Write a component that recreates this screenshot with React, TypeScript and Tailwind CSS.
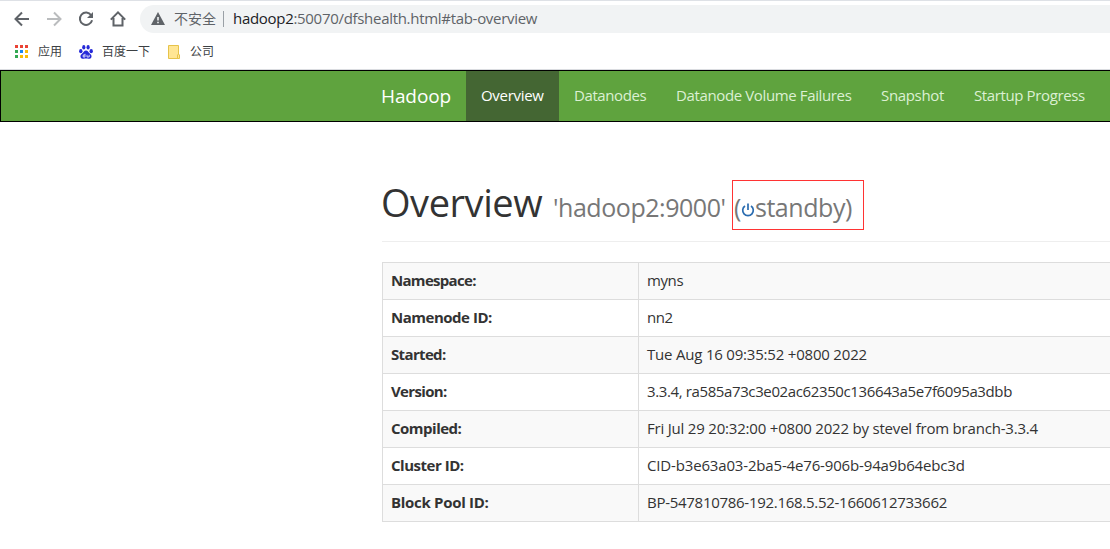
const navItems = [
  { label: "Overview", active: true, width: "w-[93px]", tracking: "tracking-[-0.3px]" },
  { label: "Datanodes", active: false, width: "w-[102px]", tracking: "tracking-[-0.4px]" },
  { label: "Datanode Volume Failures", active: false, width: "w-[205px]", tracking: "tracking-[-0.37px]" },
  { label: "Snapshot", active: false, width: "w-[93px]", tracking: "tracking-[-0.33px]" },
  { label: "Startup Progress", active: false, width: "w-[141px]", tracking: "tracking-[-0.38px]" },
];

const rows = [
  { name: "Namespace:", value: "myns", nameTracking: "tracking-[-0.7px]", tracking: "tracking-[-0.4px]" },
  { name: "Namenode ID:", value: "nn2", nameTracking: "tracking-[-0.48px]", tracking: "tracking-[-0.4px]" },
  { name: "Started:", value: "Tue Aug 16 09:35:52 +0800 2022", nameTracking: "tracking-[-0.65px]", tracking: "tracking-[-0.2px]" },
  { name: "Version:", value: "3.3.4, ra585a73c3e02ac62350c136643a5e7f6095a3dbb", nameTracking: "tracking-[-0.65px]", tracking: "tracking-[-0.38px]" },
  { name: "Compiled:", value: "Fri Jul 29 20:32:00 +0800 2022 by stevel from branch-3.3.4", nameTracking: "tracking-[-0.5px]", tracking: "tracking-[-0.2px]" },
  { name: "Cluster ID:", value: "CID-b3e63a03-2ba5-4e76-906b-94a9b64ebc3d", nameTracking: "tracking-[-0.48px]", tracking: "tracking-[-0.16px]" },
  { name: "Block Pool ID:", value: "BP-547810786-192.168.5.52-1660612733662", nameTracking: "tracking-[-0.3px]", tracking: "tracking-[-0.28px]" },
];

const appColors = [
  "bg-[#ea4335]", "bg-[#ea4335]", "bg-[#ea4335]",
  "bg-[#34a853]", "bg-[#1a86f0]", "bg-[#fbbc05]",
  "bg-[#34a853]", "bg-[#fbbc05]", "bg-[#fbbc05]",
];

const ArrowIcon = ({ className }: { className: string }) => (
  <svg width="16" height="16" viewBox="0 0 16 16" fill="none" className={className}>
    <path d="M15 8H2M8 1.5L1.5 8L8 14.5" stroke="currentColor" strokeWidth="2" />
  </svg>
);

const BrowserBar = () => (
  <div className="h-[69px] border-t border-[#dee1e6] bg-white">
    <div className="flex h-9 items-center">
      <div className="flex w-[140px] items-center pl-3.5 text-[#5f6368]">
        <ArrowIcon className="mr-4" />
        <ArrowIcon className="mr-4 rotate-180 text-[#babcbe]" />
        <svg width="16" height="16" viewBox="0 0 16 16" fill="none" className="mr-4">
          <path d="M13.2 4.2A6.2 6.2 0 1 0 14.1 9.3" stroke="currentColor" strokeWidth="2" />
          <path d="M15 1V7H9Z" fill="currentColor" />
        </svg>
        <svg width="16" height="16" viewBox="0 0 16 16" fill="none">
          <path d="M0.8 8.6L8 1.4L15.2 8.6M3.5 7V14.5H12.5V7" stroke="currentColor" strokeWidth="2" />
        </svg>
      </div>
      <div className="flex h-7 flex-1 items-center rounded-l-full bg-[#f1f3f4] pl-[11px]">
        <svg width="14" height="13" viewBox="0 0 14 13" className="mb-0.5 shrink-0 text-[#5f6368]">
          <path d="M7 0L14 13H0Z" fill="currentColor" />
          <path d="M6.2 5H7.8V8.6H6.2ZM6.2 9.8H7.8V11.3H6.2Z" fill="#f1f3f4" />
        </svg>
        <span className="mb-0.5 ml-[9px] w-[49px] text-[14px] text-[#5f6368]">不安全</span>
        <span className="h-4 w-px bg-[#9aa0a6]" />
        <span className="mb-0.5 ml-[9px] text-[15px] tracking-[-0.3px] text-[#202124]">
          hadoop2<span className="text-[#5f6368]">:50070/dfshealth.html#tab-overview</span>
        </span>
      </div>
    </div>
    <div className="flex h-[30px] items-center pl-[15px] text-[12px] text-[#3c4043]">
      <div className="mb-0.5 grid grid-cols-3 gap-[2px]">
        {appColors.map((color, i) => (
          <span key={i} className={`size-[3px] ${color}`} />
        ))}
      </div>
      <span className="ml-2.5">应用</span>
      <svg width="14" height="14" viewBox="0 0 14 14" fill="#2529d8" className="ml-[17px]">
        <ellipse cx="1.8" cy="6.2" rx="1.7" ry="2.1" />
        <ellipse cx="4.8" cy="2.3" rx="1.6" ry="2.2" />
        <ellipse cx="9.1" cy="2.3" rx="1.6" ry="2.2" />
        <ellipse cx="12.2" cy="6.2" rx="1.7" ry="2.1" />
        <path d="M7 5.4C5 5.4 4.8 7.2 3.2 8.5C1.7 9.7 1.1 11 1.7 12.4C2.5 14.2 4.8 13.6 7 13.6S11.5 14.2 12.3 12.4C12.9 11 12.3 9.7 10.8 8.5C9.2 7.2 9 5.4 7 5.4Z" />
        <path d="M6 8.8V12H4.2V10H6M8 9.8V12H10.2V9.8" fill="none" stroke="#fff" strokeWidth="0.8" />
      </svg>
      <span className="ml-[9px]">百度一下</span>
      <svg width="12" height="14" viewBox="0 0 12 14" fill="#ffe694" stroke="#e6c34a" className="ml-[18px]">
        <path d="M0.5 0.5H10.5V13.5H0.5Z" />
        <path d="M10.5 9L11.5 10V13.5H9.5V10Z" />
      </svg>
      <span className="ml-2.5">公司</span>
    </div>
  </div>
);

const Navbar = () => (
  <nav className="flex h-[52px] border border-r-0 border-black bg-[#5fa33e] text-[15px] whitespace-nowrap text-[#dcf0d3]">
    <a className="ml-[365px] w-[100px] pl-[15px] text-[19px] leading-[50px] tracking-[-0.1px] text-white">Hadoop</a>
    {navItems.map((item) => (
      <a
        key={item.label}
        className={`shrink-0 pl-[15px] leading-[48px] ${item.width} ${item.tracking} ${
          item.active ? "bg-[#446633] text-white" : ""
        }`}
      >
        {item.label}
      </a>
    ))}
  </nav>
);

const App = () => {
  return (
    <div className="h-[549px] w-[1110px] overflow-hidden bg-white font-['Open_Sans','Noto_Sans_CJK_SC',sans-serif] text-[#333]">
      <BrowserBar />
      <div className="h-px bg-[#dadce0]" />
      <Navbar />
      <main className="pl-[382px]">
        <h1 className="flex h-[120px] border-b border-[#eee] pt-[58px] text-[38px] leading-[46px] whitespace-nowrap">
          <span className="-mt-px -ml-px w-[172px] tracking-[-0.45px]">Overview</span>
          <small className="w-[179px] pt-1 text-[25px] tracking-[-0.45px] text-[#777]">'hadoop2:9000'</small>
          <small className="flex h-[50px] w-[132px] items-center border border-[#f33] pl-px text-[25px] tracking-[-0.45px] text-[#777]">
            <span className="pt-1">(</span>
            <svg width="14" height="14" viewBox="0 0 14 14" fill="none" stroke="#2a6cb0" strokeWidth="1.7" className="mt-2.5">
              <path d="M4 3A5.3 5.3 0 1 0 10 3M7 0.5V7" />
            </svg>
            <span className="pt-1">standby)</span>
          </small>
        </h1>
        <table className="mt-5 w-[760px] table-fixed border-collapse text-[15px] leading-5 whitespace-nowrap">
          <tbody>
            {rows.map((row) => (
              <tr key={row.name} className="odd:bg-[#f9f9f9]">
                <th className={`w-[256px] border border-[#ddd] px-2 pt-[7px] pb-[9px] text-left font-bold ${row.nameTracking}`}>
                  {row.name}
                </th>
                <td className={`border border-[#ddd] px-2 pt-[7px] pb-[9px] ${row.tracking}`}>{row.value}</td>
              </tr>
            ))}
          </tbody>
        </table>
      </main>
    </div>
  );
};

export default App;
